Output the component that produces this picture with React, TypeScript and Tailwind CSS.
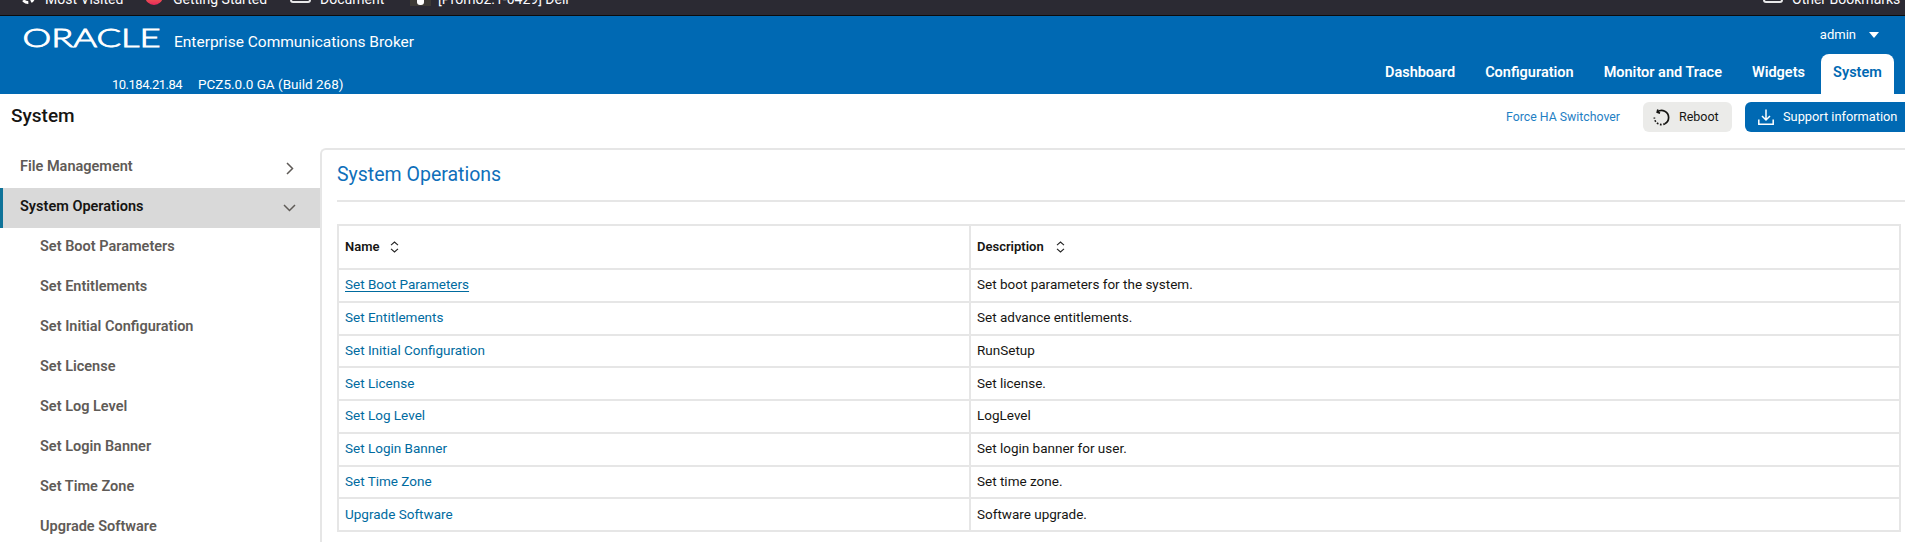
import React from "react";

const F = { fontFamily: 'Roboto, "Noto Sans", Arial, sans-serif' };

const sub = [
  "Set Boot Parameters",
  "Set Entitlements",
  "Set Initial Configuration",
  "Set License",
  "Set Log Level",
  "Set Login Banner",
  "Set Time Zone",
  "Upgrade Software",
];

const rows: [string, string][] = [
  ["Set Boot Parameters", "Set boot parameters for the system."],
  ["Set Entitlements", "Set advance entitlements."],
  ["Set Initial Configuration", "RunSetup"],
  ["Set License", "Set license."],
  ["Set Log Level", "LogLevel"],
  ["Set Login Banner", "Set login banner for user."],
  ["Set Time Zone", "Set time zone."],
  ["Upgrade Software", "Software upgrade."],
];

function Sort() {
  return (
    <svg width="9" height="12" viewBox="0 0 9 12" fill="none" stroke="#222" strokeWidth="1.1" className="shrink-0">
      <path d="M1 4.2 4.5 1 8 4.2M1 7.8 4.5 11 8 7.8" />
    </svg>
  );
}

function Bookmark({ icon, label, className }: { icon: React.ReactNode; label: string; className: string }) {
  return (
    <div className={`flex items-end ${className}`}>
      {icon}
      <span className="text-[14px] leading-[14px] text-[#fbfbfe] whitespace-nowrap mb-[9px]">{label}</span>
    </div>
  );
}

export default function App() {
  return (
    <div className="w-[1905px] h-[542px] overflow-hidden bg-white flex flex-col" style={F}>
      {/* browser bookmarks strip */}
      <div className="h-[16px] shrink-0 bg-[#2b2a33] border-b border-[#0c0c0d] flex items-end overflow-hidden">
        <Bookmark
          className="ml-[21px] w-[124px] gap-[10px]"
          label="Most Visited"
          icon={<span className="w-[14px] h-[14px] rounded-full border-[3px] border-white border-dashed mb-[11px]" />}
        />
        <Bookmark
          className="w-[145px] gap-[10px]"
          label="Getting Started"
          icon={<span className="w-[18px] h-[18px] rounded-full bg-gradient-to-b from-[#ff8a1e] to-[#e5245c] mb-[10px]" />}
        />
        <Bookmark
          className="w-[120px] gap-[9px]"
          label="Document"
          icon={<span className="w-[21px] h-[18px] rounded-[3px] border-2 border-[#e8e8ea] mb-[12px]" />}
        />
        <Bookmark
          className="w-[1000px] gap-[7px]"
          label="[Promo2.1-0429] Dell"
          icon={
            <span className="w-[21px] h-[18px] bg-[#3d3a36] mb-[9px] flex items-end justify-center pb-[1px]">
              <span className="w-[7px] h-[6px] bg-white rounded-b-[3px]" />
            </span>
          }
        />
        <Bookmark
          className="ml-[353px] gap-[9px]"
          label="Other Bookmarks"
          icon={<span className="w-[20px] h-[18px] rounded-[3px] border-2 border-[#e8e8ea] mb-[12px]" />}
        />
      </div>

      {/* header */}
      <header className="h-[78px] shrink-0 bg-[#0069b3] flex text-white">
        <div className="flex-1 flex flex-col">
          <div className="flex items-start pl-[23px] pt-[13px]">
            <svg width="137" height="18" viewBox="0 0 137 18" className="shrink-0 overflow-visible">
              <text
                x="-0.5"
                y="17.5"
                fontSize="25.5"
                textLength="138"
                lengthAdjust="spacingAndGlyphs"
                fill="#fff"
                stroke="#fff"
                strokeWidth="0.9"
                style={{ fontFamily: '"Lato", sans-serif', fontWeight: 300 }}
              >
                ORACLE
              </text>
            </svg>
            <span className="ml-[14px] mt-[2px] text-[15.5px] leading-[22px] whitespace-nowrap">
              Enterprise Communications Broker
            </span>
          </div>
          <div className="flex items-baseline pl-[112px] mt-auto text-[13.5px] leading-[18px] gap-[16px]">
            <span className="text-[13px] tracking-[-0.5px]">10.184.21.84</span>
            <span>PCZ5.0.0 GA (Build 268)</span>
          </div>
        </div>
        <div className="flex flex-col items-end">
          <div className="flex items-center h-[38px] pr-[26px] text-[13px] gap-[13px]">
            <span>admin</span>
            <span className="w-0 h-0 border-x-[5px] border-x-transparent border-t-[6px] border-t-white" />
          </div>
          <nav className="flex h-[40px] pr-[11px] text-[14.5px] font-semibold items-center">
            <span className="mr-[30px] pb-[2px]">Dashboard</span>
            <span className="mr-[30px] pb-[2px]">Configuration</span>
            <span className="mr-[30px] pb-[2px]">Monitor and Trace</span>
            <span className="mr-[16px] pb-[2px]">Widgets</span>
            <span className="w-[73px] h-full bg-white text-[#0069b3] rounded-t-[8px] flex items-center justify-center pb-[2px]">
              System
            </span>
          </nav>
        </div>
      </header>

      {/* title row */}
      <div className="h-[54px] shrink-0 flex items-start pt-[8px]">
        <h1 className="ml-[11px] mr-auto text-[19px] leading-[28px] font-medium text-[#161513]">System</h1>
        <span className="text-[12.3px] leading-[30px] text-[#1f80c4]">Force HA Switchover</span>
        <button className="ml-[23px] w-[89px] h-[30px] rounded-[6px] bg-[#ebebe9] flex items-center pl-[10px] gap-[9px] text-[12.5px] text-[#161513]">
          <svg width="17" height="17" viewBox="0 0 16 16" fill="none" stroke="#161513" strokeWidth="1.6" className="shrink-0">
            <path d="M4.2 2.6A6.7 6.7 0 0 1 14.7 8a6.7 6.7 0 0 1-3.6 5.9" />
            <path d="M11.1 13.9A6.7 6.7 0 0 1 1.3 8" strokeDasharray="1.6 1.5" />
            <path d="M4.6 0.5 4 3l2.6.9" />
          </svg>
          Reboot
        </button>
        <button className="ml-[13px] w-[160px] h-[30px] rounded-l-[6px] bg-[#0069b3] flex items-center pl-[13px] gap-[9px] text-[12.8px] text-white whitespace-nowrap">
          <svg width="16" height="16" viewBox="0 0 16 16" fill="none" stroke="#fff" strokeWidth="1.5" className="shrink-0">
            <path d="M8 0.5v10M4 7l4 4 4-4M0.8 10.5v4.7h14.4v-4.7" />
          </svg>
          Support information
        </button>
      </div>

      <div className="flex flex-1 min-h-0">
        {/* sidebar */}
        <aside className="w-[320px] shrink-0 text-[14.5px] font-semibold text-[#5f5b57]">
          <div className="h-[40px] flex items-center justify-between pl-[20px] pr-[26px]">
            <span className="pb-[3px]">File Management</span>
            <svg width="8" height="13" viewBox="0 0 8 13" fill="none" stroke="#5f5b57" strokeWidth="1.5">
              <path d="M1 1l5.5 5.5L1 12" />
            </svg>
          </div>
          <div className="h-[40px] flex items-center justify-between bg-[#d9d9d9] border-l-[3px] border-[#0f7399] pl-[17px] pr-[24px] text-[#161513]">
            <span className="pb-[3px]">System Operations</span>
            <svg width="13" height="8" viewBox="0 0 13 8" fill="none" stroke="#5f5b57" strokeWidth="1.5">
              <path d="M1 1l5.5 5.5L12 1" />
            </svg>
          </div>
          {sub.map((s) => (
            <div key={s} className="h-[40px] flex items-center pl-[40px] pb-[3px]">
              {s}
            </div>
          ))}
        </aside>

        {/* card */}
        <main className="flex-1 min-w-0 border-l-2 border-t-2 border-[#e6e6e6] rounded-tl-[6px] pl-[15px]">
          <h2 className="h-[52px] flex items-center text-[19.5px] text-[#0f6fba] border-b-2 border-[#e6e6e6]">
            System Operations
          </h2>
          <table className="mt-[22px] w-[1564px] table-fixed border-collapse text-[13.5px]">
            <colgroup>
              <col className="w-[632px]" />
              <col />
            </colgroup>
            <thead>
              <tr className="h-[44px]">
                <th className="border-2 border-[#e6e6e6] pl-[6px] text-left font-semibold text-[13px] text-[#161513]">
                  <span className="flex items-center gap-[11px]">
                    Name <Sort />
                  </span>
                </th>
                <th className="border-2 border-[#e6e6e6] pl-[6px] text-left font-semibold text-[13px] text-[#161513]">
                  <span className="flex items-center gap-[12px]">
                    Description <Sort />
                  </span>
                </th>
              </tr>
            </thead>
            <tbody>
              {rows.map(([n, d], i) => (
                <tr key={n} className="h-[32.75px]">
                  <td className="border-2 border-[#e6e6e6] pl-[6px] pb-[2px] text-[#006b9f]">
                    <span className={i === 0 ? "underline underline-offset-2" : ""}>{n}</span>
                  </td>
                  <td className="border-2 border-[#e6e6e6] pl-[6px] pb-[2px] text-[#161513]">{d}</td>
                </tr>
              ))}
            </tbody>
          </table>
        </main>
      </div>
    </div>
  );
}
